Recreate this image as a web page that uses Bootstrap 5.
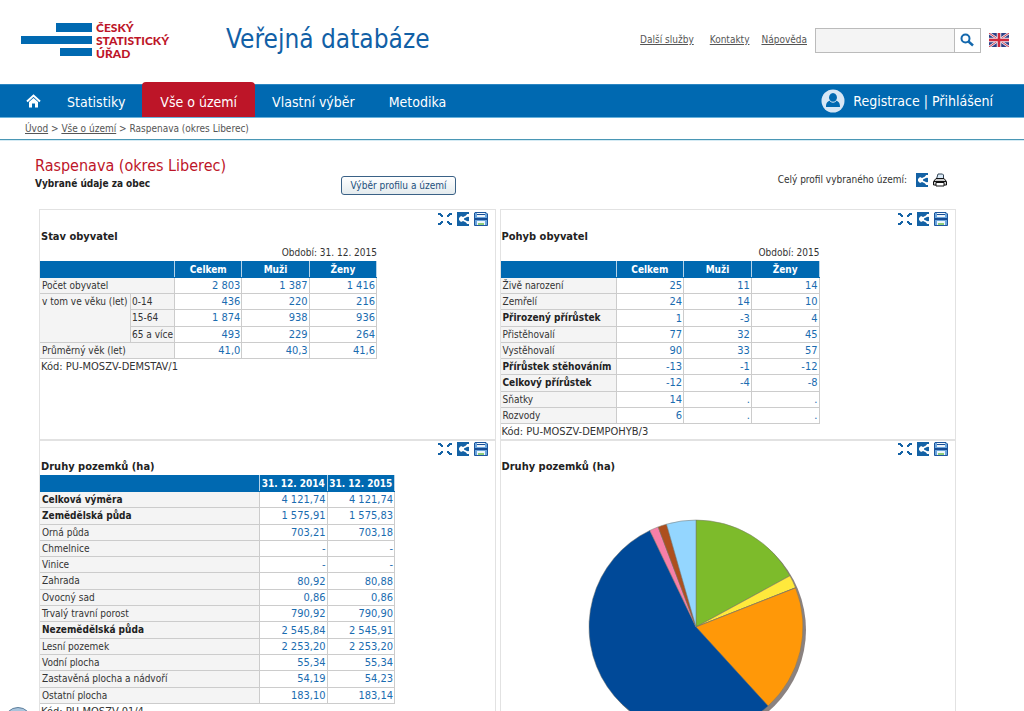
<!DOCTYPE html>
<html lang="cs">
<head>
<meta charset="utf-8">
<meta name="viewport" content="width=device-width, initial-scale=1">
<title>Veřejná databáze</title>
<link href="https://cdn.jsdelivr.net/npm/bootstrap@5.3.0/dist/css/bootstrap.min.css" rel="stylesheet">
<style>
:root{--blue:#0069b1;--red:#bd1528}
body{font-family:"DejaVu Sans Condensed","DejaVu Sans",sans-serif;font-size:10px;line-height:16px;color:#333}
a{color:#555}
.site-head{height:84px;padding:0 15px 4px 21px}
.logo-text{font:900 12px/13px Lato,sans-serif;color:var(--red)}
.site-title{font-size:26px;line-height:32px;color:#1160a6;margin-left:57px;padding-bottom:2px}
.search-box{width:166px;height:25px;border:1px solid #bbb}
.search-box input{background:#f4f4f4;border:0;border-right:1px solid #bbb;border-radius:0;font-size:11px}
.search-box button{width:30px;background:#fff;border:0}
.site-nav{background:var(--blue);border-top:1px solid #2c86c2;border-bottom:1px solid #69b3dc;height:34px;padding-right:31px;font-size:14px;line-height:34px}
.site-nav a{color:#fff;text-decoration:none}
.site-nav .nav-link{padding:0 17px;color:#fff}
.site-nav .nav-link.active{background:var(--red);border-radius:4px 4px 0 0;margin-top:-3px;padding:3px 18px 0}
.site-nav .home{padding:0 9px 0 26px}
.crumbs{height:22px;line-height:22px;padding-left:25px;border-bottom:1px solid #4a97b5;box-shadow:0 1px #d5ebf4;color:#555}
.page-body{padding:16px 68px 0 35px}
.head-left{width:306px}
h1{font-size:16px;line-height:20px;color:var(--red)}
h2,.strong-line{font-size:11px;line-height:16px;font-weight:700;color:#222}
.strong-line{font-size:10px}
.pick{height:19px;width:115px;border:1px solid #3a6186;border-radius:3px;background:linear-gradient(#fff,#e4ebee);color:#234f7c;line-height:16px;padding:0;margin-bottom:-3px}
.profile{padding-right:9px}
.panels{display:grid;grid-template-columns:1fr 1fr;column-gap:4px;margin:17px 0 0 4px}
.panel{border:1px solid #e2e2e2;border-bottom:0;min-height:229px;padding-top:2px}
.panel + .panel + .panel{border-top:2px solid #e2e2e2;padding-top:1px}
.tools{height:17px;padding-right:7px}
.tools svg,.profile svg{display:block}
.data{border-collapse:collapse;table-layout:fixed;caption-side:top}
.data caption{padding:0;text-align:right;color:#333;line-height:16px}
.data th,.data td{border:1px solid #ccc;padding:0 1px;line-height:15px;white-space:nowrap}
.data thead th,.data thead td{background:var(--blue);color:#fff;text-align:center;border-color:var(--blue);border-right-color:#b5d3e8}
.data tbody th{background:#f4f4f4;font-weight:400;vertical-align:top;border-left-color:#f4f4f4}
.data tbody .sum th{font-weight:700;color:#222}
.data tbody td{text-align:right;color:#1a6cb0;font-size:11px}
.six-rows{width:337px;height:98px}
.ten-rows{width:319px;height:163px}
.fourteen-rows{width:355px;height:229px}
.code-line{font-size:11px;line-height:15px}
.panel > *{margin-left:1px}
.panel > .data{margin-left:0}
.chart{margin:44px 0 20px 87px!important}
.float-btn{position:fixed;left:4px;bottom:-24px;width:28px;height:28px;border-radius:50%;border:1px solid #5c7f9c;background:#a9c4dc;padding:0}
</style>
</head>
<body>
<svg width="0" height="0" class="position-absolute" aria-hidden="true">
<symbol id="expand" viewBox="0 0 14 14"><path fill="#1462a5" d="M0 1h3v1h1v1h1v2H3V4H2V3H0zM14 1h-3v1h-1v1H9v2h2V4h1V3h2zM0 13h3v-1h1v-1h1V9H3v1H2v1H0zM14 13h-3v-1h-1v-1H9V9h2v1h1v1h2z"/></symbol>
<symbol id="share" viewBox="0 0 14 14"><path fill="#1462a5" d="M1 0h12v14H1z"/><path d="M13 3 5 7l8 4" fill="none" stroke="#fff" stroke-width="1.800"/><path fill="#fff" d="M3 6l2-2 3 1.500v3L5 10 3 8zM11 2h2v3l-3-1zM11 12h2V9l-3 1z"/></symbol>
<symbol id="disk" viewBox="0 0 14 14"><path d="M1 .5h11l1.500 1.500v11.500H.5V1z" fill="#6aa5dc" stroke="#1c559c"/><path fill="#eef5fb" d="M3 1h8v4H3zM3 9h8v4H3z"/><path fill="#174c94" d="M3 2h8v1H3zM1 6h12v2H1z"/><path fill="#8dcc7a" d="M4 11h6v2H4z"/></symbol>
<symbol id="printer" viewBox="0 0 14 14"><path d="M3.500 6 5 1h4.500l1 1V6" fill="#dbeaf8" stroke="#345"/><path d="M.5 8.500 3 5.500h8l2.500 3V12H.5z" fill="#ccc" stroke="#111"/><path d="M3 9.500h8v3.500H3z" fill="#fff" stroke="#111"/><path d="M1 8.500h12" stroke="#111"/></symbol>
</svg>

<header class="site-head d-flex align-items-center">
  <a href="#" class="d-flex align-items-center gap-1 text-decoration-none" aria-label="Český statistický úřad">
    <svg width="71" height="34" viewBox="0 0 71 34"><path fill="#0069b1" d="M35 0h36v9H35zM0 13h71v8H0zM39 25h32v8H39z"/></svg>
    <span class="logo-text">ČESKÝ<br>STATISTICKÝ<br>ÚŘAD</span>
  </a>
  <div class="site-title">Veřejná databáze</div>
  <nav class="d-flex ms-auto align-items-center" aria-label="Služby">
    <a href="#" class="me-3">Další služby</a><a href="#" class="me-2 pe-1">Kontakty</a><a href="#" class="me-2">Nápověda</a>
  </nav>
  <form class="search-box d-flex">
    <input type="text" class="form-control p-1" aria-label="Hledat">
    <button type="button" class="p-0" aria-label="Hledat"><svg width="14" height="14" viewBox="0 0 14 14" class="d-block m-auto"><circle cx="5.500" cy="5.500" r="4" fill="none" stroke="#1468ad" stroke-width="2"/><path d="m8.500 8.500 4.500 4" stroke="#1468ad" stroke-width="2.500"/></svg></button>
  </form>
  <a href="#" class="ms-2" aria-label="English"><svg width="20" height="14" viewBox="0 0 20 14" class="d-block"><path fill="#2c3f86" d="M0 0h20v14H0z"/><path d="m0 0 20 14M20 0 0 14" stroke="#e8e8f0" stroke-width="2.500"/><path d="m0 0 20 14M20 0 0 14" stroke="#d23b4c"/><path d="M10 0v14M0 7h20" stroke="#e8e8f0" stroke-width="4.500"/><path d="M10 0v14M0 7h20" stroke="#d02a3e" stroke-width="2.500"/></svg></a>
</header>

<nav class="site-nav d-flex" aria-label="Hlavní nabídka">
  <a href="#" class="home d-flex align-items-center" aria-label="Domů"><svg width="15" height="14" viewBox="0 0 15 14"><path d="M1 7.500 7.500 1.500 14 7.500" fill="none" stroke="#fff" stroke-width="2"/><path fill="#fff" d="M7.500 4 12 8v5.500H9V9.500H6v4H3V8z"/></svg></a>
  <a href="#" class="nav-link">Statistiky</a>
  <a href="#" class="nav-link active" aria-current="page">Vše o území</a>
  <a href="#" class="nav-link">Vlastní výběr</a>
  <a href="#" class="nav-link">Metodika</a>
  <div class="ms-auto d-flex align-items-center">
    <svg width="24" height="24" viewBox="0 0 24 24" class="me-2"><circle cx="12" cy="12" r="11.500" fill="#d7e7f5"/><path fill="#0069b1" d="M12 4a4 4.500 0 0 1 3 7.500c2 1 4 1.500 4 6.500H5c0-5 2-5.500 4-6.500A4 4.500 0 0 1 12 4z"/><path d="M8.500 11.500q3.500 3.500 7 0" fill="none" stroke="#d7e7f5"/></svg>
    <span class="text-white"><a href="#">Registrace</a> | <a href="#">Přihlášení</a></span>
  </div>
</nav>
<div class="crumbs"><a href="#">Úvod</a> &gt; <a href="#">Vše o území</a> &gt; Raspenava (okres Liberec)</div>

<main class="page-body">
  <div class="d-flex align-items-end">
    <div class="head-left"><h1 class="m-0">Raspenava (okres Liberec)</h1><div class="strong-line">Vybrané údaje za obec</div></div>
    <button type="button" class="pick">Výběr profilu a území</button>
    <div class="profile ms-auto d-flex align-items-center pb-1"><span class="me-2">Celý profil vybraného území:</span>
      <a href="#" class="me-1" aria-label="Sdílet"><svg width="14" height="14"><use href="#share"/></svg></a><a href="#" aria-label="Tisk"><svg width="14" height="14"><use href="#printer"/></svg></a></div>
  </div>

  <div class="panels">
    <section class="panel">
      <div class="tools d-flex justify-content-end gap-1"><a href="#" aria-label="Zvětšit"><svg width="14" height="14"><use href="#expand"/></svg></a><a href="#" aria-label="Sdílet"><svg width="14" height="14"><use href="#share"/></svg></a><a href="#" aria-label="Uložit"><svg width="14" height="14"><use href="#disk"/></svg></a></div>
      <h2 class="mb-0">Stav obyvatel</h2>
      <table class="data six-rows">
        <caption>Období: 31. 12. 2015</caption>
        <colgroup><col style="width:90px"><col style="width:44px"><col><col><col></colgroup>
        <thead><tr><td colspan="2"></td><th>Celkem</th><th>Muži</th><th>Ženy</th></tr></thead>
        <tbody>
          <tr><th colspan="2">Počet obyvatel</th><td>2 803</td><td>1 387</td><td>1 416</td></tr>
          <tr><th rowspan="3">v tom ve věku (let)</th><th>0-14</th><td>436</td><td>220</td><td>216</td></tr>
          <tr><th>15-64</th><td>1 874</td><td>938</td><td>936</td></tr>
          <tr><th>65 a více</th><td>493</td><td>229</td><td>264</td></tr>
          <tr><th colspan="2">Průměrný věk (let)</th><td>41,0</td><td>40,3</td><td>41,6</td></tr>
        </tbody>
      </table>
      <div class="code-line">Kód: PU-MOSZV-DEMSTAV/1</div>
    </section>

    <section class="panel">
      <div class="tools d-flex justify-content-end gap-1"><a href="#" aria-label="Zvětšit"><svg width="14" height="14"><use href="#expand"/></svg></a><a href="#" aria-label="Sdílet"><svg width="14" height="14"><use href="#share"/></svg></a><a href="#" aria-label="Uložit"><svg width="14" height="14"><use href="#disk"/></svg></a></div>
      <h2 class="mb-0">Pohyb obyvatel</h2>
      <table class="data ten-rows">
        <caption>Období: 2015</caption>
        <colgroup><col style="width:115px"><col><col><col></colgroup>
        <thead><tr><td></td><th>Celkem</th><th>Muži</th><th>Ženy</th></tr></thead>
        <tbody>
          <tr><th>Živě narození</th><td>25</td><td>11</td><td>14</td></tr>
          <tr><th>Zemřelí</th><td>24</td><td>14</td><td>10</td></tr>
          <tr class="sum"><th>Přirozený přírůstek</th><td>1</td><td>-3</td><td>4</td></tr>
          <tr><th>Přistěhovalí</th><td>77</td><td>32</td><td>45</td></tr>
          <tr><th>Vystěhovalí</th><td>90</td><td>33</td><td>57</td></tr>
          <tr class="sum"><th>Přírůstek stěhováním</th><td>-13</td><td>-1</td><td>-12</td></tr>
          <tr class="sum"><th>Celkový přírůstek</th><td>-12</td><td>-4</td><td>-8</td></tr>
          <tr><th>Sňatky</th><td>14</td><td>.</td><td>.</td></tr>
          <tr><th>Rozvody</th><td>6</td><td>.</td><td>.</td></tr>
        </tbody>
      </table>
      <div class="code-line">Kód: PU-MOSZV-DEMPOHYB/3</div>
    </section>

    <section class="panel">
      <div class="tools d-flex justify-content-end gap-1"><a href="#" aria-label="Zvětšit"><svg width="14" height="14"><use href="#expand"/></svg></a><a href="#" aria-label="Sdílet"><svg width="14" height="14"><use href="#share"/></svg></a><a href="#" aria-label="Uložit"><svg width="14" height="14"><use href="#disk"/></svg></a></div>
      <h2 class="mb-0">Druhy pozemků (ha)</h2>
      <table class="data fourteen-rows">
        <colgroup><col style="width:219px"><col><col></colgroup>
        <thead><tr><td></td><th>31. 12. 2014</th><th>31. 12. 2015</th></tr></thead>
        <tbody>
          <tr class="sum"><th>Celková výměra</th><td>4 121,74</td><td>4 121,74</td></tr>
          <tr class="sum"><th>Zemědělská půda</th><td>1 575,91</td><td>1 575,83</td></tr>
          <tr><th>Orná půda</th><td>703,21</td><td>703,18</td></tr>
          <tr><th>Chmelnice</th><td>-</td><td>-</td></tr>
          <tr><th>Vinice</th><td>-</td><td>-</td></tr>
          <tr><th>Zahrada</th><td>80,92</td><td>80,88</td></tr>
          <tr><th>Ovocný sad</th><td>0,86</td><td>0,86</td></tr>
          <tr><th>Trvalý travní porost</th><td>790,92</td><td>790,90</td></tr>
          <tr class="sum"><th>Nezemědělská půda</th><td>2 545,84</td><td>2 545,91</td></tr>
          <tr><th>Lesní pozemek</th><td>2 253,20</td><td>2 253,20</td></tr>
          <tr><th>Vodní plocha</th><td>55,34</td><td>55,34</td></tr>
          <tr><th>Zastavěná plocha a nádvoří</th><td>54,19</td><td>54,23</td></tr>
          <tr><th>Ostatní plocha</th><td>183,10</td><td>183,14</td></tr>
        </tbody>
      </table>
      <div class="code-line">Kód: PU-MOSZV-01/4</div>
    </section>

    <section class="panel">
      <div class="tools d-flex justify-content-end gap-1"><a href="#" aria-label="Zvětšit"><svg width="14" height="14"><use href="#expand"/></svg></a><a href="#" aria-label="Sdílet"><svg width="14" height="14"><use href="#share"/></svg></a><a href="#" aria-label="Uložit"><svg width="14" height="14"><use href="#disk"/></svg></a></div>
      <h2 class="mb-0">Druhy pozemků (ha)</h2>
      <svg class="chart d-block" id="pie" width="220" height="220" viewBox="-108 -108 220 220" role="img" aria-label="Druhy pozemků"><circle cx="3" cy="3" r="107" fill="#8a8280"/></svg>
    </section>
  </div>
</main>
<button type="button" class="float-btn" aria-label="Nahoru"></button>

<script src="https://cdn.jsdelivr.net/npm/bootstrap@5.3.0/dist/js/bootstrap.bundle.min.js"></script>
<script>
// Land use shares, clockwise from the top.
const slices = [[703.18,'#7dbb2b'],[80.88,'#ffe93c'],[0.86,'#8a7a50'],[790.90,'#ff9808'],[2253.20,'#004998'],[55.34,'#f77fa8'],[54.23,'#ad4f1e'],[183.14,'#94d6ff']];
const total = slices.reduce((s, x) => s + x[0], 0), r = 107;
let a = 0;
for (const [v, color] of slices) {
  const b = a + v / total * 2 * Math.PI;
  const p = document.createElementNS('http://www.w3.org/2000/svg', 'path');
  p.setAttribute('d', `M0 0L${r*Math.sin(a)} ${-r*Math.cos(a)}A${r} ${r} 0 ${b-a>Math.PI?1:0} 1 ${r*Math.sin(b)} ${-r*Math.cos(b)}Z`);
  p.setAttribute('fill', color);
  p.setAttribute('stroke', '#77756a');
  p.setAttribute('stroke-width', '0.5');
  document.getElementById('pie').append(p);
  a = b;
}
</script>
</body>
</html>
